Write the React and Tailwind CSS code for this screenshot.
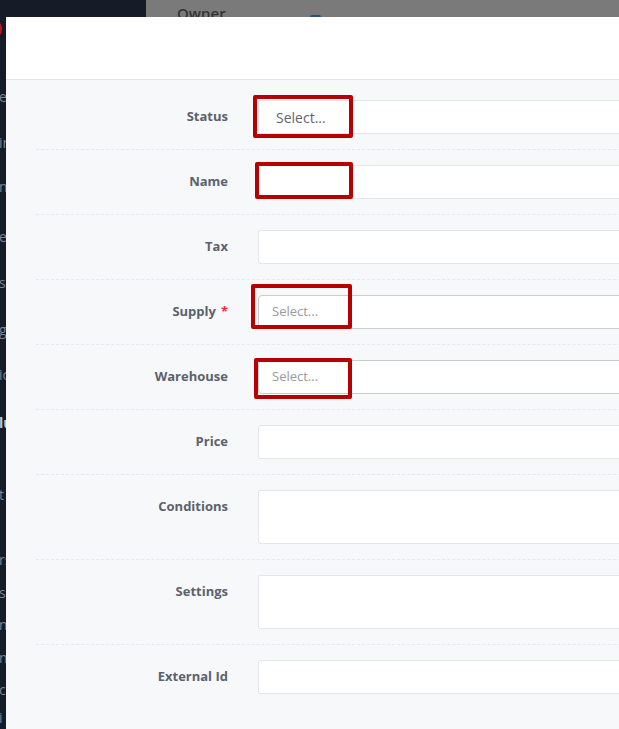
import React from "react";

const side = [
  { t: "e", c: "mt-[49px] text-[#7d8391]" },
  { t: "ir", c: "mt-[26px] text-[#7d8391]" },
  { t: "n,", c: "mt-[24px] text-[#7d8391]" },
  { t: "el", c: "mt-[30px] text-[#7d8391]" },
  { t: "s", c: "mt-[26px] text-[#7d8391]" },
  { t: "g", c: "mt-[27px] text-[#7d8391]" },
  { t: "ic", c: "mt-[25px] text-[#7d8391]" },
  { t: "lu", c: "mt-[28px] text-[#c3c7cf] font-bold" },
  { t: "t", c: "mt-[52px] text-[#7d8391]" },
  { t: "rs", c: "mt-[45px] text-[#7d8391]" },
  { t: "s", c: "mt-[13px] text-[#7d8391]" },
  { t: "n", c: "mt-[12px] text-[#7d8391]" },
  { t: "n", c: "mt-[13px] text-[#7d8391]" },
  { t: "c", c: "mt-[12px] text-[#7d8391]" },
  { t: "i", c: "mt-[8px] text-[#7d8391]" },
];

function Label({ children, required }) {
  return (
    <div className="w-[192px] h-[34px] shrink-0 flex items-center justify-end text-[13px] font-bold text-[#5c616d]">
      {children}
      {required && <span className="ml-[5px] text-[#ef2a2a]">*</span>}
    </div>
  );
}

function Row({ label, required, children }) {
  return (
    <div className="flex items-start gap-[30px] py-[15px] border-b border-dashed border-[#e7e9ee]">
      <Label required={required}>{label}</Label>
      <div className="flex-1 relative">{children}</div>
    </div>
  );
}

function Box({ cls }) {
  return <div className={"absolute border-[4px] border-[#b80000] rounded-[2px] " + cls} />;
}

const plainInput = "h-[34px] bg-white border border-[#e4e6eb] rounded-[2px]";

export default function App() {
  return (
    <div className="relative w-[619px] h-[729px] overflow-hidden flex bg-[#7a7a7a] font-['Open_Sans',sans-serif]">
      <div className="w-[146px] h-full shrink-0 bg-[#151c27] flex flex-col text-[14px] leading-[20px]">
        <div className="mt-[20px] -ml-[14px] w-[16px] h-[18px] rounded-full bg-[#b01c1c]" />
        {side.map((s, i) => (
          <div key={i} className={"h-[20px] -ml-[1px] whitespace-nowrap " + s.c}>
            {s.t}
          </div>
        ))}
      </div>
      <div className="flex-1 flex items-start pt-[3px] pl-[31px]">
        <span className="text-[15px] font-semibold text-[#333] leading-[20px]">Owner</span>
        <div className="ml-[84px] mt-[12px] w-[11px] h-[11px] border-2 border-[#27507a] rounded-[2px]" />
      </div>

      <div className="absolute left-[6px] top-[17px] w-[700px] bottom-0 bg-[#f7f8fa] flex flex-col">
        <div className="h-[63px] shrink-0 bg-white border-b border-[#e4e6eb]" />
        <div className="pt-[5px] pl-[30px]">
          <Row label="Status">
            <div className={plainInput + " flex items-center pl-[17px] text-[14px] text-[#5f6470]"}>Select...</div>
            <Box cls="-left-[5px] -top-[5px] w-[100px] h-[43px]" />
          </Row>
          <Row label="Name">
            <div className={plainInput} />
            <Box cls="-left-[3px] -top-[3px] w-[98px] h-[37px]" />
          </Row>
          <Row label="Tax">
            <div className={plainInput} />
          </Row>
          <Row label="Supply" required>
            <div className="h-[34px] bg-white border border-[#cccccc] rounded-[4px] flex items-center pl-[13px] text-[13px] text-[#9a9a9a]">Select...</div>
            <Box cls="-left-[7px] -top-[11px] w-[101px] h-[45px]" />
          </Row>
          <Row label="Warehouse">
            <div className="h-[34px] bg-white border border-[#cccccc] rounded-[4px] flex items-center pl-[13px] text-[13px] text-[#9a9a9a]">Select...</div>
            <Box cls="-left-[4px] -top-[2px] w-[98px] h-[41px]" />
          </Row>
          <Row label="Price">
            <div className={plainInput} />
          </Row>
          <Row label="Conditions">
            <div className="h-[54px] bg-white border border-[#e4e6eb] rounded-[2px]" />
          </Row>
          <Row label="Settings">
            <div className="h-[54px] bg-white border border-[#e4e6eb] rounded-[2px]" />
          </Row>
          <div className="flex items-start gap-[30px] py-[15px]">
            <Label>External Id</Label>
            <div className="flex-1">
              <div className={plainInput} />
            </div>
          </div>
        </div>
      </div>
    </div>
  );
}
